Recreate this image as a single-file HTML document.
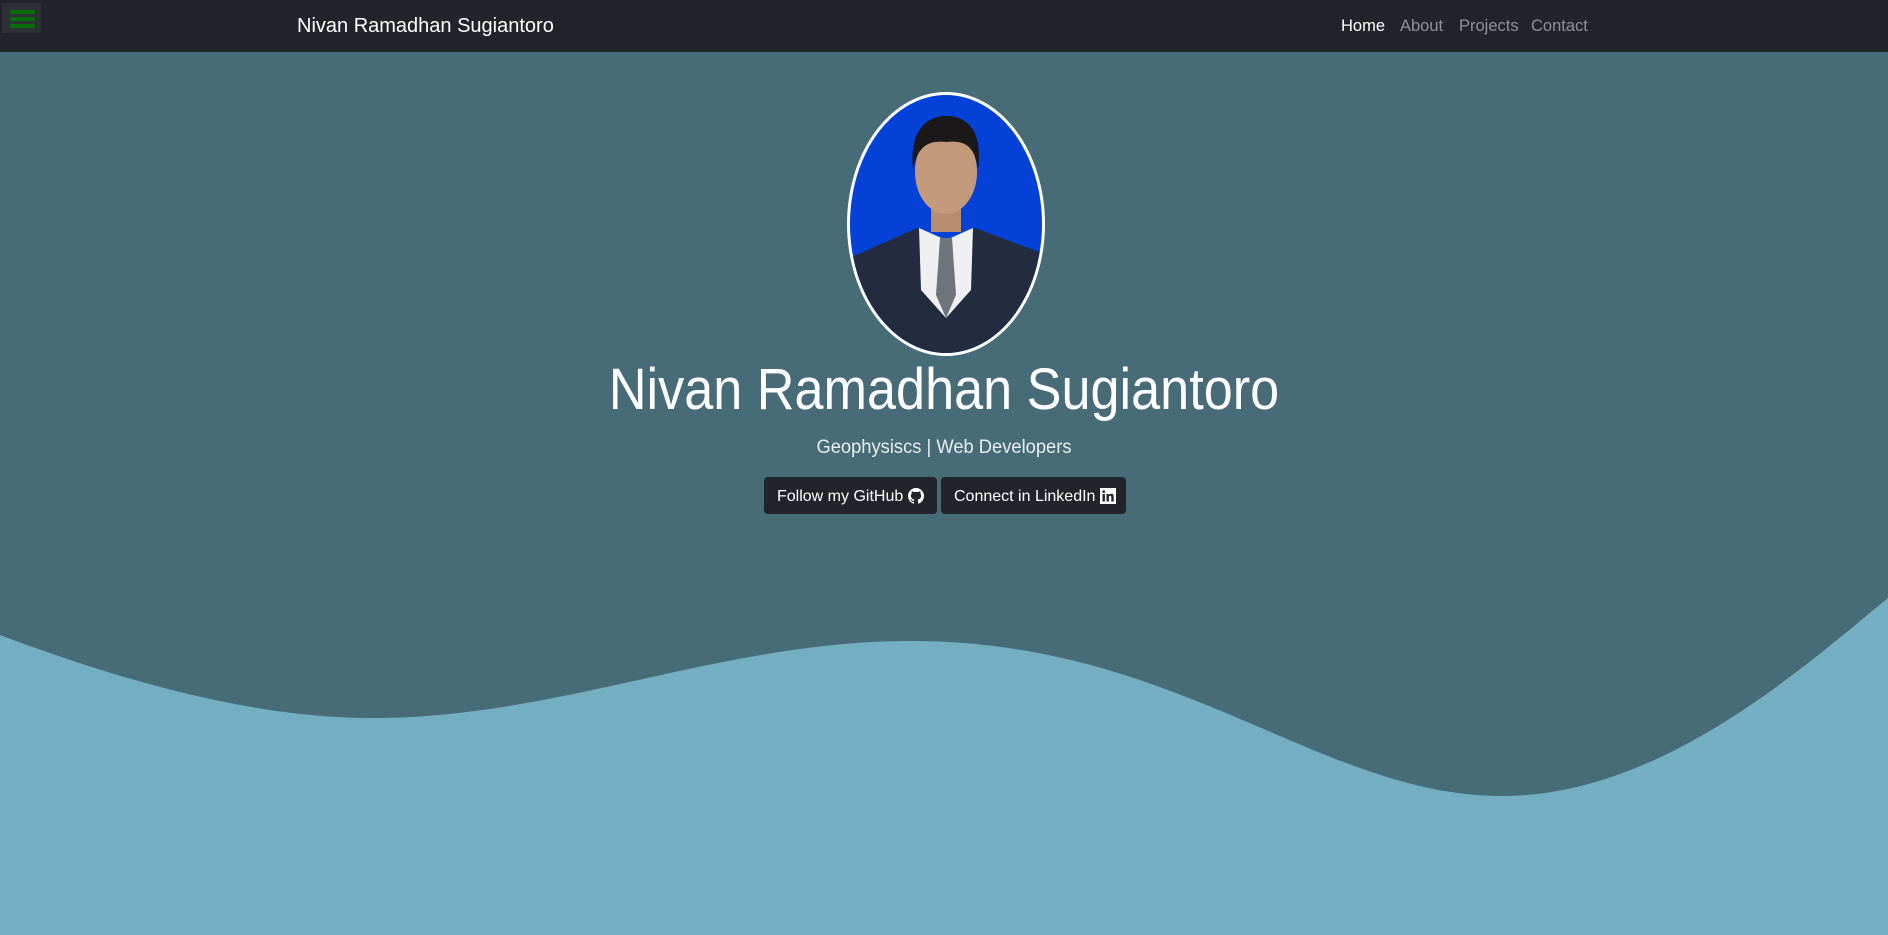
<!DOCTYPE html>
<html><head><meta charset="utf-8"><style>
*{margin:0;padding:0;box-sizing:border-box}
body{width:1888px;height:935px;overflow:hidden;background:#476b77;font-family:"Liberation Sans",sans-serif;position:relative}
nav{position:absolute;left:0;top:0;width:1888px;height:52px;background:#212529}
.ham{position:absolute;left:2px;top:3px;width:39px;height:30px;background:#2d3133}
.ham i{position:absolute;left:8px;width:25px;height:4px;background:#0a6b0a;border-radius:2px}
.brand{position:absolute;left:297px;top:15px;color:#fff;font-size:20px}
.links{position:absolute;top:17px;font-size:16.5px;color:#8e9194}
.wave{position:absolute;left:0;top:0}
h1{position:absolute;left:0;width:1888px;top:356px;text-align:center;color:#fff;font-weight:300;font-size:58px;transform:scaleX(0.9)}
.sub{position:absolute;left:0;width:1888px;top:436px;text-align:center;color:#e8eef0;font-size:19.5px;transform:scaleX(0.94)}
.btn{position:absolute;top:477px;height:37px;background:#212529;border-radius:4px;color:#fff;font-size:16px;line-height:39px;padding-left:13px}
</style></head><body>
<svg class="wave" width="1888" height="935"><path d="M0,635 C120,680 250,718 373,718 C560,718 720,641 911,641 C1180,641 1320,796 1502,796 C1660,796 1800,670 1888,598 L1888,935 L0,935Z" fill="#73aec2"/></svg>
<nav><div class="ham"><i style="top:7px"></i><i style="top:14px"></i><i style="top:21px"></i></div>
<div class="brand">Nivan Ramadhan Sugiantoro</div>
<span class="links" style="left:1341px;color:#fff">Home</span>
<span class="links" style="left:1400px">About</span>
<span class="links" style="left:1459px">Projects</span>
<span class="links" style="left:1531px">Contact</span></nav>
<svg style="position:absolute;left:845px;top:90px" width="202" height="270" viewBox="0 0 202 270">
<defs><clipPath id="c"><ellipse cx="101" cy="134" rx="96" ry="129"/></clipPath></defs>
<ellipse cx="101" cy="134" rx="99" ry="132" fill="#fff"/>
<g clip-path="url(#c)">
<rect width="202" height="270" fill="#0441d6"/>
<path d="M0,170 L72,138 L101,150 L130,138 L202,165 L202,270 L0,270Z" fill="#222b40"/>
<path d="M74,138 L101,150 L128,138 L126,200 L101,228 L76,200Z" fill="#eef0f3"/>
<path d="M95,148 L107,148 L111,205 L101,228 L91,205Z" fill="#6f747c"/>
<rect x="86" y="110" width="30" height="32" fill="#b88d70"/>
<ellipse cx="101" cy="82" rx="31" ry="42" fill="#c49a7c"/>
<path d="M68,80 C64,40 82,26 101,26 C122,26 138,40 133,80 C130,56 120,50 101,52 C84,50 72,56 68,80Z" fill="#1a1818"/>
</g></svg>
<h1>Nivan Ramadhan Sugiantoro</h1>
<div class="sub">Geophysiscs | Web Developers</div>
<div class="btn" style="left:764px;width:173px">Follow my GitHub <svg width="16" height="16" viewBox="0 0 16 16" style="vertical-align:-3px"><path fill="#fff" d="M8 0C3.58 0 0 3.58 0 8c0 3.54 2.29 6.53 5.47 7.59.4.07.55-.17.55-.38v-1.33c-2.23.48-2.7-1.07-2.7-1.07-.36-.92-.89-1.17-.89-1.17-.73-.5.06-.49.06-.49.8.06 1.23.83 1.23.83.72 1.22 1.87.87 2.33.66.07-.52.28-.87.51-1.07-1.78-.2-3.64-.89-3.64-3.95 0-.87.31-1.59.82-2.15-.08-.2-.36-1.02.08-2.12 0 0 .67-.21 2.2.82a7.6 7.6 0 0 1 4 0c1.53-1.04 2.2-.82 2.2-.82.44 1.1.16 1.92.08 2.12.51.56.82 1.27.82 2.15 0 3.07-1.87 3.75-3.65 3.95.29.25.54.73.54 1.48v2.2c0 .21.15.46.55.38A8 8 0 0 0 16 8c0-4.42-3.58-8-8-8z"/></svg></div>
<div class="btn" style="left:941px;width:185px">Connect in LinkedIn <svg width="16" height="16" viewBox="0 0 16 16" style="vertical-align:-3px"><rect width="16" height="16" fill="#fff"/><rect x="2.5" y="6" width="2.4" height="7.5" fill="#212529"/><circle cx="3.7" cy="3.6" r="1.4" fill="#212529"/><path d="M6.5 6h2.3v1.1c.4-.7 1.3-1.3 2.5-1.3 2 0 2.4 1.3 2.4 3v4.7h-2.4V9.4c0-.9-.1-1.7-1.1-1.7s-1.3.8-1.3 1.7v4.1H6.5z" fill="#212529"/></svg></div>
</body></html>
